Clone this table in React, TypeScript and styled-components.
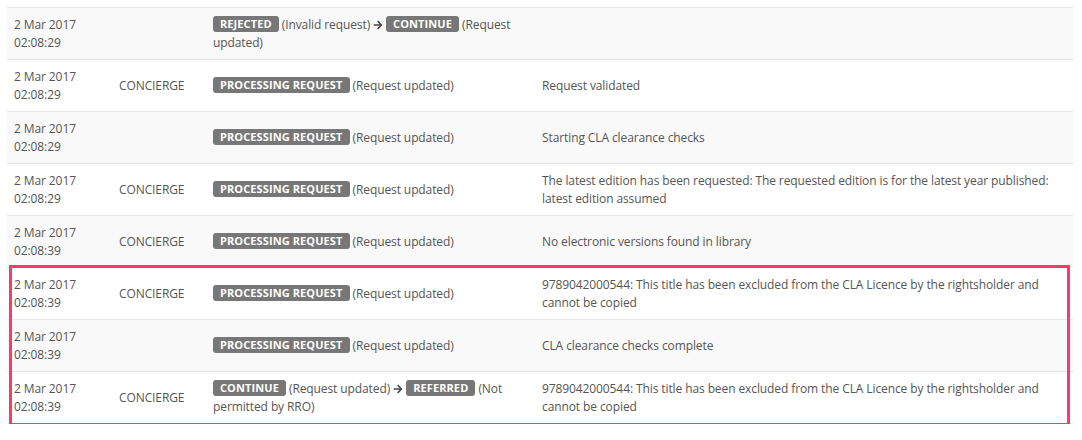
import React from "react";
import styled, { createGlobalStyle } from "styled-components";

const GlobalStyle = createGlobalStyle`
  html, body {
    margin: 0;
    padding: 0;
    background: #ffffff;
  }
  body {
    font-family: "Open Sans", "Liberation Sans", Arial, sans-serif;
    font-size: 12px;
    color: #555555;
    letter-spacing: -0.1px;
  }
`;

const Page = styled.div`
  padding: 7px 9px 0 7px;
`;

const Table = styled.div`
  width: 1066px;
  display: flex;
  flex-direction: column;
`;

const Row = styled.div<{ $striped: boolean }>`
  display: grid;
  grid-template-columns: 105px 94px 329px 1fr;
  border-top: 1px solid #e6e6e6;
  background: ${(p) => (p.$striped ? "#f9f9f9" : "#ffffff")};
`;

const Cell = styled.div`
  padding: 8px 7px 7px 7px;
  line-height: 18px;
  display: flex;
  align-items: center;
  min-height: 36px;
`;

const CellText = styled.div`
  width: 100%;
`;

const Highlight = styled.div`
  position: relative;
  border-bottom: 1px solid #e6e6e6;
  &::after {
    content: "";
    position: absolute;
    top: -2px;
    left: 2px;
    right: 3px;
    bottom: -3px;
    border: 3px solid #fb3a6c;
    pointer-events: none;
  }
`;

const Badge = styled.span`
  display: inline-block;
  background: #777777;
  color: #ffffff;
  font-weight: 700;
  font-size: 11px;
  line-height: 11px;
  padding: 2px 7px 3px 7px;
  border-radius: 3px;
  vertical-align: 1px;
  letter-spacing: 0.1px;
`;

const Arrow = styled.svg`
  width: 10px;
  height: 10px;
  margin: 0 3px 0 3px;
  vertical-align: -1px;
  fill: #444444;
`;

type Part = { badge: string; note: string };

type Entry = {
  date: string;
  time: string;
  actor: string;
  status: Part[];
  message: string;
};

const ArrowIcon = () => (
  <Arrow viewBox="0 0 448 512" aria-hidden="true">
    <path d="M190.5 66.9l22.2-22.2c9.4-9.4 24.6-9.4 33.9 0L441 239c9.4 9.4 9.4 24.6 0 33.9L246.6 467.3c-9.4 9.4-24.6 9.4-33.9 0l-22.2-22.2c-9.5-9.5-9.3-25 .4-34.3L311.4 296H24c-13.3 0-24-10.7-24-24v-32c0-13.3 10.7-24 24-24h287.4L190.9 101.2c-9.8-9.3-10-24.8-.4-34.3z" />
  </Arrow>
);

const Status = ({ parts }: { parts: Part[] }) => (
  <CellText>
    {parts.map((p, i) => (
      <React.Fragment key={i}>
        {i > 0 && <ArrowIcon />}
        <Badge>{p.badge}</Badge> {p.note}
      </React.Fragment>
    ))}
  </CellText>
);

const PR: Part[] = [{ badge: "PROCESSING REQUEST", note: "(Request updated)" }];
const EXCLUDED =
  "9789042000544: This title has been excluded from the CLA Licence by the rightsholder and cannot be copied";

const entries: Entry[] = [
  {
    date: "2 Mar 2017",
    time: "02:08:29",
    actor: "",
    status: [
      { badge: "REJECTED", note: "(Invalid request)" },
      { badge: "CONTINUE", note: "(Request updated)" },
    ],
    message: "",
  },
  { date: "2 Mar 2017", time: "02:08:29", actor: "CONCIERGE", status: PR, message: "Request validated" },
  { date: "2 Mar 2017", time: "02:08:29", actor: "", status: PR, message: "Starting CLA clearance checks" },
  {
    date: "2 Mar 2017",
    time: "02:08:29",
    actor: "CONCIERGE",
    status: PR,
    message:
      "The latest edition has been requested: The requested edition is for the latest year published: latest edition assumed",
  },
  {
    date: "2 Mar 2017",
    time: "02:08:39",
    actor: "CONCIERGE",
    status: PR,
    message: "No electronic versions found in library",
  },
  { date: "2 Mar 2017", time: "02:08:39", actor: "CONCIERGE", status: PR, message: EXCLUDED },
  { date: "2 Mar 2017", time: "02:08:39", actor: "", status: PR, message: "CLA clearance checks complete" },
  {
    date: "2 Mar 2017",
    time: "02:08:39",
    actor: "CONCIERGE",
    status: [
      { badge: "CONTINUE", note: "(Request updated)" },
      { badge: "REFERRED", note: "(Not permitted by RRO)" },
    ],
    message: EXCLUDED,
  },
];

const EntryRow = ({ e, striped }: { e: Entry; striped: boolean }) => (
  <Row $striped={striped}>
    <Cell>
      <CellText>
        {e.date}
        <br />
        {e.time}
      </CellText>
    </Cell>
    <Cell>
      <CellText>{e.actor}</CellText>
    </Cell>
    <Cell>
      <Status parts={e.status} />
    </Cell>
    <Cell>
      <CellText>{e.message}</CellText>
    </Cell>
  </Row>
);

export default function App() {
  const plain = entries.slice(0, 5);
  const flagged = entries.slice(5);
  return (
    <>
      <GlobalStyle />
      <Page>
        <Table>
          {plain.map((e, i) => (
            <EntryRow key={i} e={e} striped={i % 2 === 0} />
          ))}
          <Highlight>
            {flagged.map((e, i) => (
              <EntryRow key={i} e={e} striped={(i + 5) % 2 === 0} />
            ))}
          </Highlight>
        </Table>
      </Page>
    </>
  );
}
